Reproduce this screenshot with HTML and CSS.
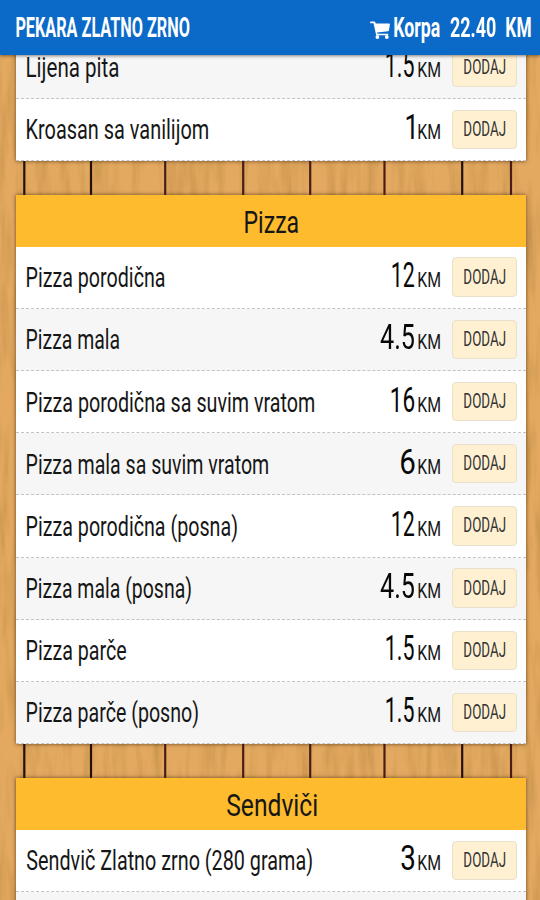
FILE: index.html
```
<!DOCTYPE html>
<html lang="bs">
<head>
<meta charset="utf-8">
<title>Pekara Zlatno zrno</title>
<link rel="stylesheet" href="styles.css">
</head>
<body>
<header class="bar">
  <div class="fit brand" data-w="173.5">PEKARA ZLATNO ZRNO</div>
  <div class="basket">
    <svg class="cart" viewBox="0 0 20 18"><path fill="#fff" d="M.8.6h3.9l1.2 1.8h13.2q.9 0 .8.9l-.9 6q-.1.9-1 1L7.2 11.4l.3 1.3h10.7v1.5H6.2L3.5 2.2H.8Q0 2.100 0 1.400T.8.6z"/><circle cx="7.4" cy="16" r="1.9" fill="#fff"/><circle cx="16.8" cy="16" r="1.9" fill="#fff"/></svg>
    <div class="fit" data-w="46">Korpa</div>
    <div class="fit" data-w="46">22.40</div>
    <div class="fit" data-w="24.5">KM</div>
  </div>
</header>
<main class="page">
  <svg class="wood" width="540" height="845" viewBox="0 55 540 845">
    <defs>
      <filter id="grain" x="0" y="0" width="100%" height="100%">
        <feTurbulence type="fractalNoise" baseFrequency="0.11 0.014" numOctaves="3" seed="7"/>
        <feColorMatrix values="0 0 0 0 .57  0 0 0 0 .29  0 0 0 0 .07  1.7 0 0 0 -.7"/>
      </filter>
    </defs>
    <rect y="55" width="540" height="845" fill="#e4a961"/>
    <rect y="55" width="540" height="845" filter="url(#grain)"/>
    <g stroke="#4a1d16" stroke-width="2.2">
      <path d="M24.3 160v36M24.3 743v36M91 160v36M91 743v36M462.2 160v36M462.2 743v36" stroke="#24100c"/>
      <path d="M165.2 160v36M165.2 743v36M243.2 160v36M243.2 743v36M310.2 160v36M310.2 743v36M384.5 160v36M384.5 743v36M511 160v36M511 743v36"/>
    </g>
  </svg>
  <div class="menu" id="menu"></div>
</main>
<script src="script.js"></script>
</body>
</html>
```
FILE: styles.css
```
* { box-sizing: border-box; }
body {
  margin: 0;
  width: 540px;
  height: 900px;
  overflow: hidden;
  display: flex;
  flex-direction: column;
  font-family: Roboto, "Liberation Sans", sans-serif;
  color: #161616;
}
.bar {
  flex: none;
  height: 55px;
  padding: 1px 9.5px 0 16px;
  display: flex;
  align-items: center;
  justify-content: space-between;
  background: #0b69c7;
  color: #fff;
  font-size: 27px;
  font-weight: 700;
  z-index: 2;
  box-shadow: 0 1px 3px rgba(40, 30, 20, .55);
}
.basket { display: flex; align-items: center; gap: 10px; }
.cart { width: 20px; height: 18px; margin: 4px -6px 0 0; }
.fit { white-space: nowrap; line-height: 1.2; }
.fit span { display: inline-block; transform-origin: 0 50%; }
.page { position: relative; flex: 1; overflow: hidden; }
.wood { position: absolute; top: 0; left: 0; }
.menu {
  position: relative;
  display: flex;
  flex-direction: column;
  gap: 34.3px;
  width: 510px;
  margin: -18.5px 0 0 16px;
}
.card { background: #fff; box-shadow: 0 0 4px rgba(60, 35, 10, .75); }
.heading {
  height: 51.4px;
  padding: 3px 0 0 1px;
  display: flex;
  align-items: center;
  justify-content: center;
  background: #fdbb2d;
  font-size: 31px;
}
.row {
  height: 62.2px;
  padding: 0 9px 0 10.5px;
  display: flex;
  align-items: center;
  justify-content: space-between;
  border-bottom: 1.5px dashed #c4c4c4;
}
.row.even { background: #f6f6f6; }
.text { width: 413px; padding-top: 2px; display: flex; align-items: baseline; justify-content: space-between; }
.text .fit { line-height: 38px; }
.price { display: flex; align-items: baseline; gap: 3.5px; }
.name { font-size: 27px; }
.amount { font-size: 35px; color: #080808; }
.unit { font-size: 21px; }
.add {
  width: 65px;
  height: 39.5px;
  padding: 0;
  display: flex;
  align-items: center;
  justify-content: center;
  border: 1.5px solid #e9e0ca;
  border-radius: 4px;
  background: #fff0d2;
  font: 400 21px Roboto, "Liberation Sans", sans-serif;
  color: #333;
}
```
FILE: script.js
```
// Each item: name, name width, price, price width, shaded row.
const sections = [
  { items: [
    ["Lijena pita", 92, "1.5", 28, 1],
    ["Kroasan sa vanilijom", 181, "1", 8, 0]
  ] },
  { title: "Pizza", width: 53.5, items: [
    ["Pizza porodična", 138, "12", 22.5, 0],
    ["Pizza mala", 92.5, "4.5", 34.5, 1],
    ["Pizza porodična sa suvim vratom", 287, "16", 23, 0],
    ["Pizza mala sa suvim vratom", 241, "6", 13.5, 1],
    ["Pizza porodična (posna)", 210, "12", 22.5, 0],
    ["Pizza mala (posna)", 164, "4.5", 34.5, 1],
    ["Pizza parče", 99.5, "1.5", 28, 0],
    ["Pizza parče (posno)", 171, "1.5", 28, 1]
  ] },
  { title: "Sendviči", width: 90, items: [
    ["Sendvič Zlatno zrno (280 grama)", 285, "3", 13.5, 0],
    ["", 0, "", 0, 1]
  ] }
];

const label = (cls, text, width) => `<div class="fit ${cls}" data-w="${width}">${text}</div>`;

document.getElementById("menu").innerHTML = sections.map(s => `
  <section class="card">
    ${s.title ? `<div class="heading">${label("", s.title, s.width)}</div>` : ""}
    ${s.items.map(([name, w, price, pw, even]) => `
      <div class="row ${even ? "even" : ""}">${name ? `
        <div class="text">
          ${label("name", name, w)}
          <div class="price">${label("amount", price, pw)}${label("unit", "KM", 22)}</div>
        </div>
        <button class="add">${label("", "DODAJ", 41)}</button>` : ""}
      </div>`).join("")}
  </section>`).join("");

// Condense each label so that its visible glyphs fill the given width.
const pen = document.createElement("canvas").getContext("2d");
document.querySelectorAll(".fit").forEach(el => {
  const style = getComputedStyle(el);
  pen.font = `${style.fontWeight} ${style.fontSize} ${style.fontFamily}`;
  const m = pen.measureText(el.textContent);
  const k = el.dataset.w / (m.actualBoundingBoxLeft + m.actualBoundingBoxRight);
  const span = document.createElement("span");
  span.textContent = el.textContent;
  span.style.transform = `translateX(${m.actualBoundingBoxLeft * k}px) scaleX(${k})`;
  el.replaceChildren(span);
  el.style.width = `${el.dataset.w}px`;
});
```
